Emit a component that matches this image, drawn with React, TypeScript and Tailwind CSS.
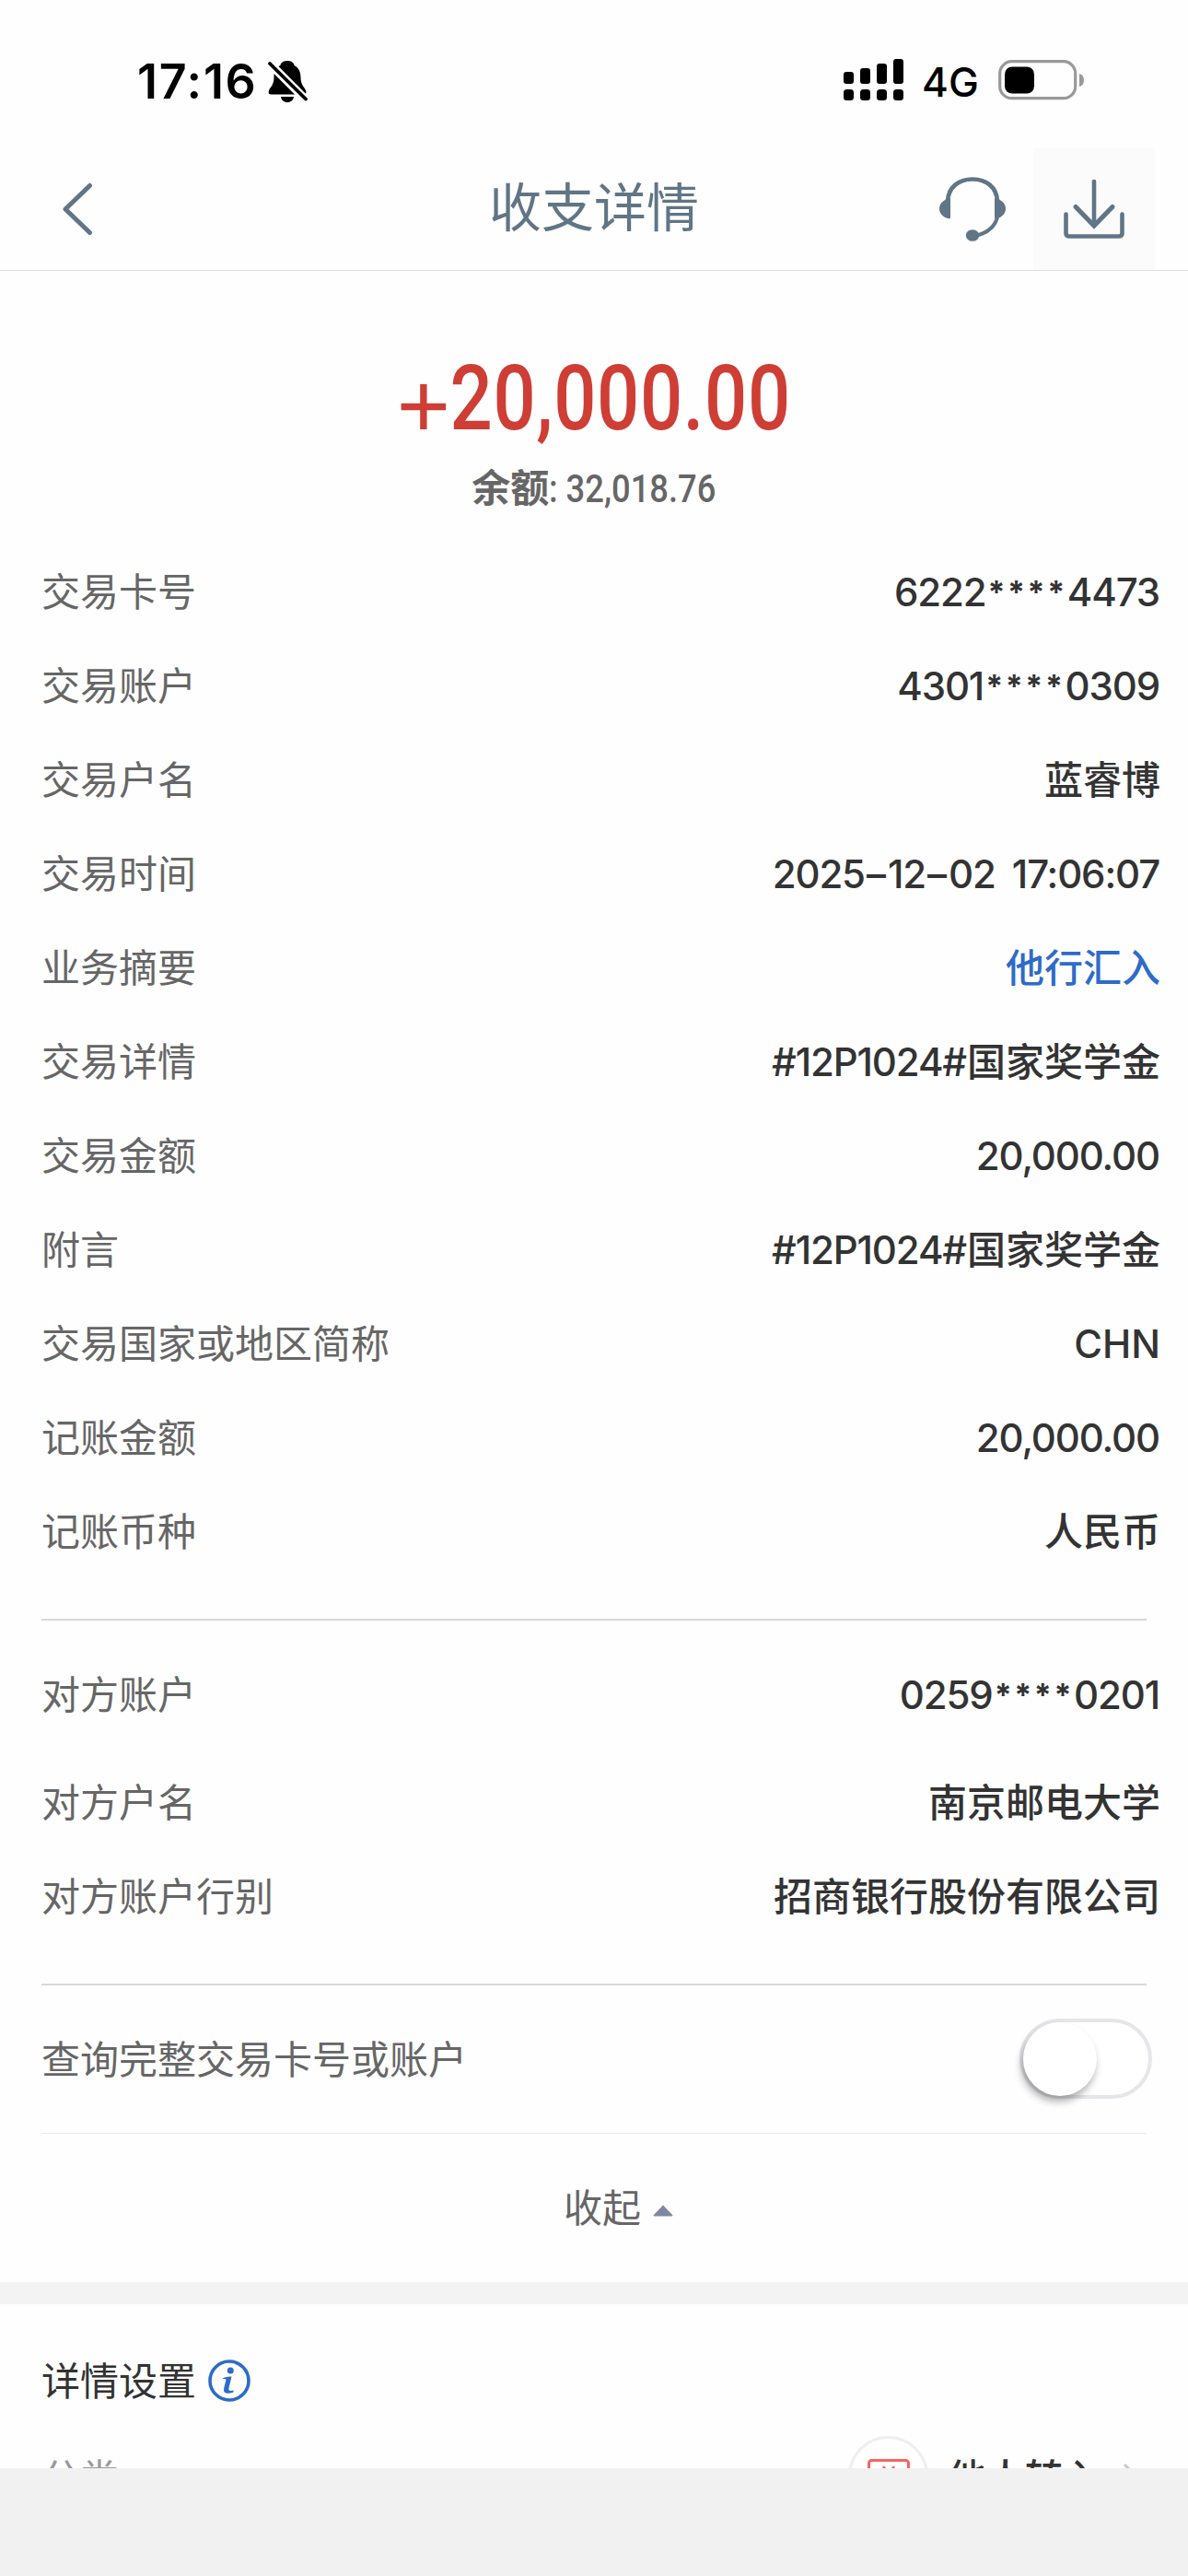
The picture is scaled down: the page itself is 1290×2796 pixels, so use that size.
import React from 'react'

interface RowProps {
  label: string
  value: string
  className?: string
  valueClassName?: string
}

// Transaction fields
const transactionRows: RowProps[] = [
  { label: '交易卡号', value: '6222****4473' },
  { label: '交易账户', value: '4301****0309' },
  { label: '交易户名', value: '蓝睿博' },
  { label: '交易时间', value: '2025–12–02 17:06:07' },
  { label: '业务摘要', value: '他行汇入', valueClassName: 'text-[#2e6bc9]' },
  { label: '交易详情', value: '#12P1024#国家奖学金' },
  { label: '交易金额', value: '20,000.00' },
  { label: '附言', value: '#12P1024#国家奖学金' },
  { label: '交易国家或地区简称', value: 'CHN' },
  { label: '记账金额', value: '20,000.00' },
  { label: '记账币种', value: '人民币' },
]

// Digits are set tighter than the masks and dashes between them
const renderValue = (value: string) =>
  value.split(/(\*+|–|[#\dP:,.]+)/).map((part, i) => {
    if (part.startsWith('*')) {
      return (
        <span key={i} className="pl-[2px] align-[3px] text-[34px] font-bold tracking-[2.600px]">
          {part}
        </span>
      )
    }
    if (part === '–') {
      return (
        <span key={i} className="mx-[2px]">
          {part}
        </span>
      )
    }
    if (/^[#\d]/.test(part)) {
      return (
        <span key={i} className="tracking-[-1.15px] last:mr-px">
          {part}
        </span>
      )
    }
    return part
  })

const Row: React.FC<RowProps> = ({
  label,
  value,
  className = 'h-[102px]',
  valueClassName = 'text-[#333333]',
}) => (
  <div className={`flex items-center justify-between pr-[30px] pl-[45px] ${className}`}>
    <span className="text-[#666666]">{label}</span>
    <span className={`font-medium [word-spacing:7px] ${valueClassName}`}>{renderValue(value)}</span>
  </div>
)

const StatusBar = () => (
  <div className="flex h-[161px] items-start justify-between pr-[112px] pl-[149px]">
    <div className="flex h-[176px] items-center">
      <span className="mt-[1px] text-[52px] leading-none font-semibold tracking-[1.7px] text-black">17:16</span>
      <svg className="ml-[10px]" width="44" height="48" viewBox="0 0 44 48">
        <path
          d="M22 2C16 2 14.500 5.500 14.500 7C9 9.500 7.500 14 7.500 20C7.500 28 3.500 30.500 2 34C1 37 2 38.500 4.500 38.500H39.500C42 38.500 43 36.500 42 34C40.500 30.500 36.500 28 36.500 20C36.500 14 34.500 9.500 29.500 7C29.500 5.500 28 2 22 2Z"
          fill="#000"
        />
        <path d="M15 41H29C28.500 44.500 26 47 22 47S15.500 44.500 15 41Z" fill="#000" />
        <path d="M3.500 5.500L42 44" stroke="#fefefe" strokeWidth="9" />
        <path d="M3 5L42 43.500" stroke="#000" strokeWidth="3.800" strokeLinecap="round" />
      </svg>
    </div>
    <div className="flex h-[174px] items-center">
      <svg width="66" height="46" viewBox="0 0 66 46">
        <rect x="0" y="14" width="11" height="13" rx="3" />
        <rect x="18" y="10" width="11" height="17" rx="3" />
        <rect x="36" y="5" width="11" height="22" rx="3" />
        <rect x="54" y="0" width="11" height="27" rx="3" />
        <rect x="0" y="33" width="11" height="12" rx="3.500" />
        <rect x="18" y="33" width="11" height="12" rx="3.500" />
        <rect x="36" y="33" width="11" height="12" rx="3.500" />
        <rect x="54" y="33" width="11" height="12" rx="3.500" />
      </svg>
      <span className="mt-[4px] ml-[19px] w-[83px] text-[44px] leading-none font-medium text-black">4G</span>
      <svg width="94" height="44" viewBox="0 0 94 44">
        <rect x="1.700" y="1.700" width="82" height="40" rx="13" fill="none" stroke="#999" strokeWidth="3.200" />
        <rect x="7" y="7.500" width="32" height="29" rx="8" />
        <path d="M88 15C91.500 16 93 18.500 93 22S91.500 28 88 29Z" fill="#999" />
      </svg>
    </div>
  </div>
)

const NavBar = () => (
  <div className="flex h-[133px] items-center border-b border-[#e0e0e0] text-[#607585]">
    <svg className="ml-[66px]" width="36" height="60" viewBox="0 0 36 60">
      <path d="M31.500 4.500L5 30L31.500 55.500" fill="none" stroke="currentColor" strokeWidth="5" strokeLinecap="round" strokeLinejoin="round" />
    </svg>
    <h1 className="mt-[-4px] ml-[429px] w-[489px] text-[57px] leading-none font-normal">收支详情</h1>
    <svg width="72" height="72" viewBox="0 0 72 72">
      <path d="M9 27C10 12 21 3.500 36 3.500S62 12 63 27" fill="none" stroke="currentColor" strokeWidth="4.600" />
      <path d="M12 24.500V45Q12 47 9 46C3 44 0 40 0 35.500S3 27 9 24.500Q12 23.500 12 24.500Z" fill="currentColor" />
      <path d="M60 24.500V45Q60 47 63 46C69 44 72 40 72 35.500S69 27 63 24.500Q60 23.500 60 24.500Z" fill="currentColor" />
      <path d="M63 45C60 56 52 62 39 65" fill="none" stroke="currentColor" strokeWidth="4.200" />
      <ellipse cx="36" cy="64.500" rx="7.200" ry="6.300" fill="currentColor" />
    </svg>
    <div className="ml-[30px] flex h-[132px] w-[132px] items-center justify-center bg-[#fbfbfb]">
      <svg width="66" height="66" viewBox="0 0 66 66">
        <path d="M33 3V50" fill="none" stroke="currentColor" strokeWidth="4.600" strokeLinecap="round" />
        <path d="M13 30.500L33 51L53 30.500" fill="none" stroke="currentColor" strokeWidth="5.200" strokeLinecap="round" />
        <path d="M2.500 38.500V59Q2.500 62.500 6 62.500H60Q63.500 62.500 63.500 59V38.500" fill="none" stroke="currentColor" strokeWidth="4.600" strokeLinecap="round" />
      </svg>
    </div>
  </div>
)

// Amount and balance header
const Summary = () => (
  <div className="flex h-[298px] flex-col items-center pt-[90px] font-['Roboto','Noto_Sans_CJK_SC',sans-serif]">
    <div className="ml-[5px] flex h-[98px] scale-x-[0.83] items-center text-[98px] leading-none font-medium text-[#ce3e35]">
      <svg className="mt-[16px] mr-[5px]" width="59" height="49" viewBox="0 0 60 49" preserveAspectRatio="none">
        <path d="M30 0V49" stroke="currentColor" strokeWidth="9" />
        <path d="M0 24.500H60" stroke="currentColor" strokeWidth="7.500" />
      </svg>
      <span className="tracking-[0.8px]">20,000.00</span>
    </div>
    <div className="mt-[28px] ml-[28px] flex h-[42px] items-center leading-none text-[#666666]">
      <span className="text-[42px] font-bold">余额</span>
      <span className="origin-left scale-x-[0.865] text-[42px] font-medium whitespace-pre">: 32,018.76</span>
    </div>
  </div>
)

const Toggle = () => (
  <div className="h-[87px] w-[144px] rounded-full border-4 border-[#e5e5ea] bg-white">
    <div className="size-[80px] rounded-full bg-white shadow-[-2px_6px_9px_rgba(0,0,0,0.32)]"></div>
  </div>
)

const App: React.FC = () => {
  return (
    <div className="flex h-[2796px] w-[1290px] flex-col overflow-hidden bg-[#fefefe] font-['Inter','Noto_Sans_CJK_SC',sans-serif] text-[42px] leading-none">
      <StatusBar />
      <NavBar />
      <Summary />

      {transactionRows.map((row) => (
        <Row key={row.label} {...row} />
      ))}

      <div className="mt-[43px] mr-[45px] mb-[30px] ml-[45px] h-[2px] bg-[#d8d8d8]"></div>

      {/* Counterparty */}
      <Row label="对方账户" value="0259****0201" />
      <Row label="对方户名" value="南京邮电大学" className="mt-[15px] h-[102px]" />
      <Row label="对方账户行别" value="招商银行股份有限公司" />

      <div className="mt-[43px] mr-[45px] ml-[45px] h-[2px] bg-[#d8d8d8]"></div>

      <div className="mx-[45px] flex h-[161px] items-center justify-between border-b border-[#ebebeb]">
        <span className="pt-[2px] text-[#666666]">查询完整交易卡号或账户</span>
        <div className="mr-[-6px] pb-[1px]">
          <Toggle />
        </div>
      </div>

      {/* Collapse button */}
      <div className="flex h-[161px] items-center pl-[612px] text-[#666666]">
        <span className="pt-[1px]">收起</span>
        <svg className="mt-[5px] ml-[13px]" width="22" height="13" viewBox="0 0 22 13">
          <path d="M11 0.500L21.500 11.500Q21.500 12.500 20 12.500H2Q0.500 12.500 0.500 11.500Z" fill="#7f869f" />
        </svg>
      </div>

      <div className="h-[24px] shrink-0 bg-[#f3f3f3]"></div>

      {/* Detail settings, cut off by the bottom bar */}
      <div className="h-[178px] shrink-0 overflow-hidden">
        <div className="flex h-[142px] items-center pt-[24px] pl-[45px]">
          <span className="pt-[2px] text-[#333333]">详情设置</span>
          <svg className="ml-[13px]" width="46" height="46" viewBox="0 0 46 46">
            <circle cx="23" cy="23" r="21" fill="none" stroke="#2e6bc9" strokeWidth="3.600" />
            <circle cx="24.300" cy="12" r="3.500" fill="#2e6bc9" />
            <path d="M15.500 21C17 19.500 20 18.500 25.500 18.500L22.500 31C22 34 23.500 34.500 27.500 33.500V35.500C24 37 17 38 17 33C17 30 19 25 19.500 21.500C18.500 20.500 17 21 15.500 21Z" fill="#2e6bc9" />
          </svg>
        </div>
        <div className="flex h-[88px] items-center pl-[45px]">
          <span className="w-[876px] pt-[5px] text-[#999999]">分类</span>
          <div className="flex size-[87px] shrink-0 items-center justify-center rounded-full border-[3px] border-[#eeeeee] pt-[2px]">
            <svg width="46" height="38" viewBox="0 0 46 38">
              <rect x="1.500" y="1.500" width="43" height="35" rx="3" fill="none" stroke="#f96262" strokeWidth="3" />
              <path d="M17 8L23 16L29 8M16 17H30M23 16V28" fill="none" stroke="#f96262" strokeWidth="2.500" />
            </svg>
          </div>
          <span className="ml-[21px] w-[190px] shrink-0 pt-[5px] font-medium text-[#333333]">他人转入</span>
          <svg className="mt-[4px]" width="20" height="32" viewBox="0 0 20 32">
            <path d="M2 2L16 16L2 30" fill="none" stroke="#c8c8c8" strokeWidth="3" />
          </svg>
        </div>
      </div>

      <div className="flex-1 bg-[#f1f1f1]"></div>
    </div>
  )
}

export default App
